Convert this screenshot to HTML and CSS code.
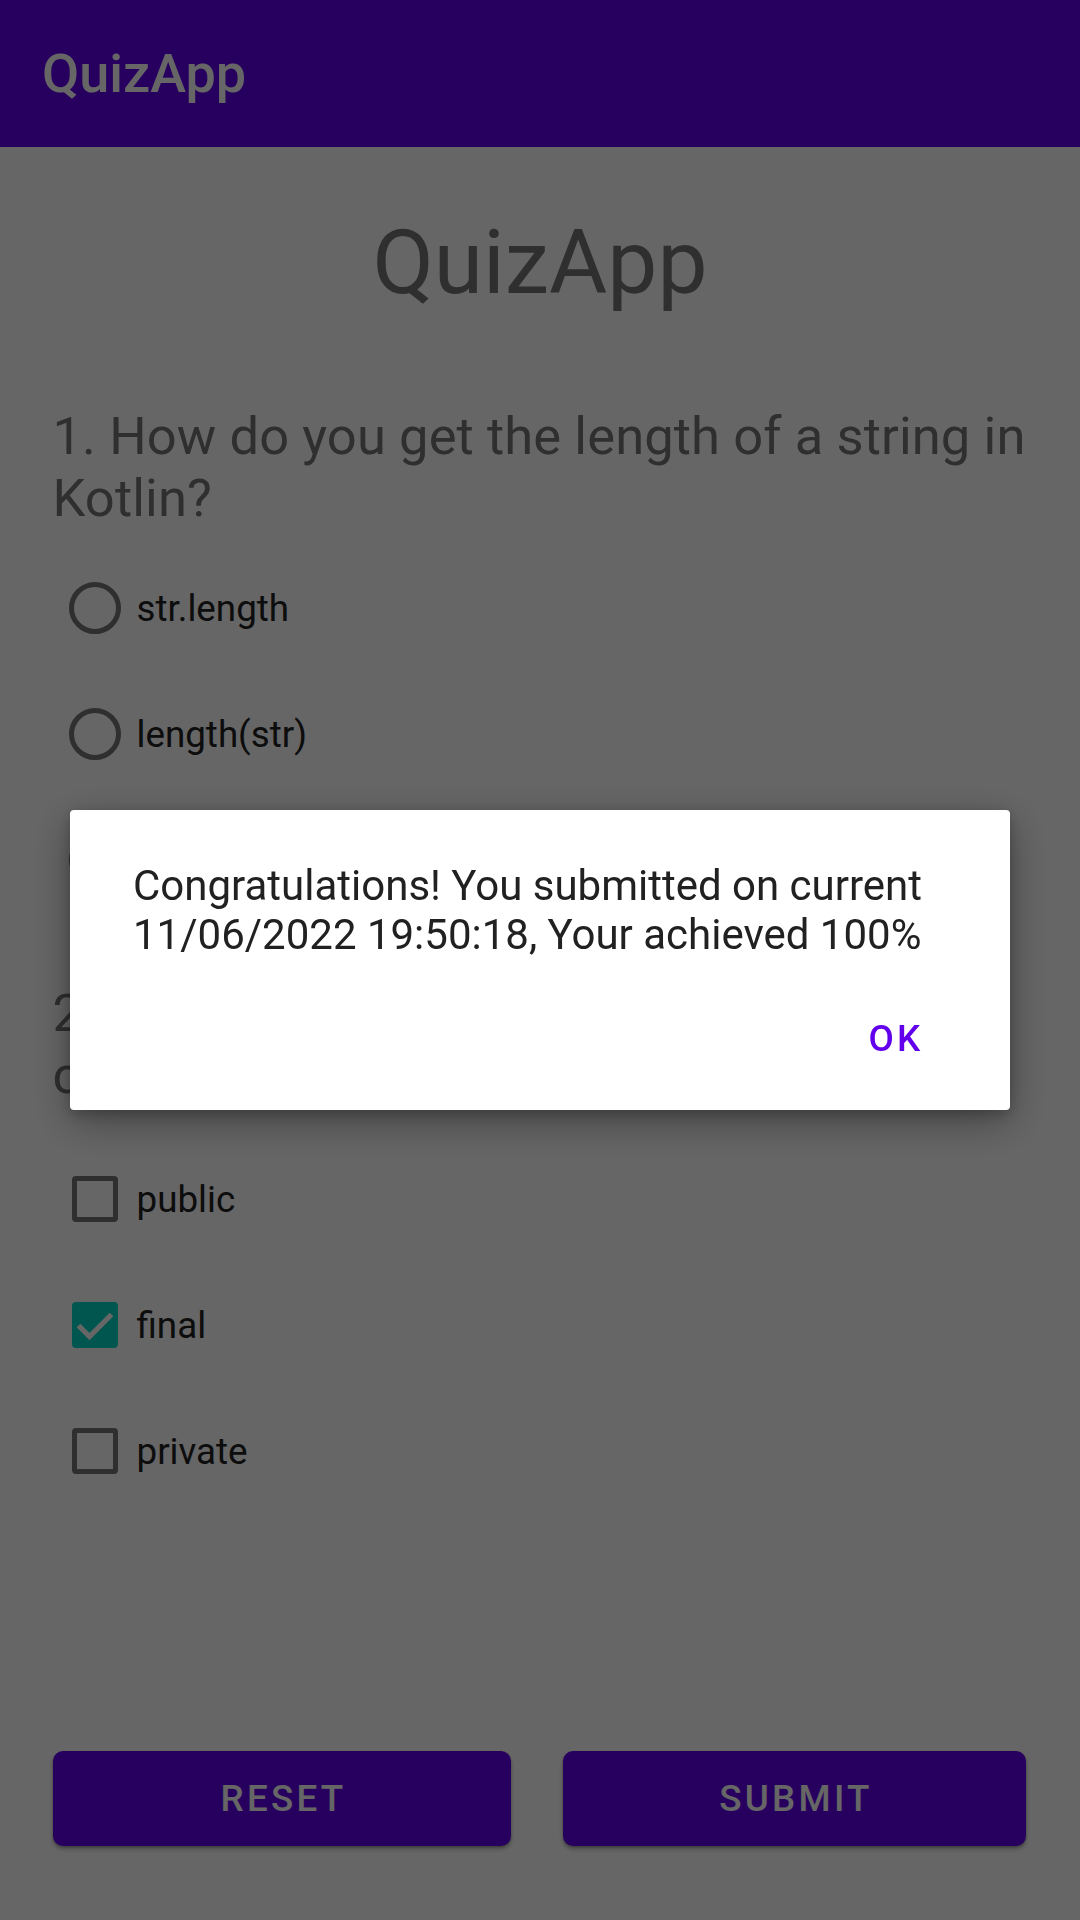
FILE: index.html
```html
<!DOCTYPE html>
<html lang="en">
<head>
<meta charset="utf-8">
<title>QuizApp</title>
<link rel="stylesheet" href="styles.css">
</head>
<body>
<div class="screen">
  <header class="toolbar">
    <h1 class="toolbar-title">QuizApp</h1>
  </header>
  <main class="content">
    <h2 class="app-title">QuizApp</h2>

    <p class="question q1">1. How do you get the length of a string in Kotlin?</p>
    <div class="options options-radio">
      <div class="option">
        <span class="control"><span class="radio"></span></span>
        <span class="option-label">str.length</span>
      </div>
      <div class="option">
        <span class="control"><span class="radio"></span></span>
        <span class="option-label">length(str)</span>
      </div>
      <div class="option">
        <span class="control"><span class="radio"></span></span>
        <span class="option-label">str.size()</span>
      </div>
    </div>

    <p class="question q2">2. Which of these keywords are the valid class modifiers in Kotlin?</p>
    <div class="options options-check">
      <div class="option">
        <span class="control"><span class="checkbox"></span></span>
        <span class="option-label">public</span>
      </div>
      <div class="option">
        <span class="control">
          <span class="checkbox checked">
            <svg class="checkmark" viewBox="0 0 46 46"><polyline points="6.5,23.5 17.5,34.5 39.5,12.5" fill="none" stroke="#ffffff" stroke-width="5.2"/></svg>
          </span>
        </span>
        <span class="option-label">final</span>
      </div>
      <div class="option">
        <span class="control"><span class="checkbox"></span></span>
        <span class="option-label">private</span>
      </div>
    </div>

    <div class="actions">
      <button class="btn">Reset</button>
      <button class="btn">Submit</button>
    </div>
  </main>
</div>

<div class="scrim">
  <div class="dialog" role="dialog">
    <p class="dialog-message">Congratulations! You submitted on current 11/06/2022 19:50:18, Your achieved 100%</p>
    <div class="dialog-actions">
      <button class="dialog-btn">OK</button>
    </div>
  </div>
</div>
</body>
</html>
```
FILE: styles.css
```css
* { box-sizing: border-box; }

html, body {
  margin: 0;
  padding: 0;
  width: 1080px;
  height: 1920px;
  overflow: hidden;
}

body {
  font-family: Roboto, "Liberation Sans", sans-serif;
  background: #ffffff;
  color: #212121;
}

.screen {
  width: 1080px;
  height: 1920px;
  display: flex;
  flex-direction: column;
  background: #ffffff;
}

.toolbar {
  height: 147px;
  flex: 0 0 147px;
  background: #6200ee;
  display: flex;
  align-items: center;
  padding-left: 42px;
}

.toolbar-title {
  margin: 0;
  font-size: 54px;
  font-weight: 500;
  color: #ffffff;
  line-height: normal;
}

.content {
  flex: 1;
  display: flex;
  flex-direction: column;
  padding: 0 40px 74px 52.5px;
}

.app-title {
  margin: 63px 12.5px 0 0;
  font-size: 89.25px;
  font-weight: 400;
  line-height: normal;
  text-align: center;
  color: #757575;
}

.question {
  margin: 0;
  font-size: 52.5px;
  font-weight: 400;
  line-height: normal;
  letter-spacing: 0.1px;
  color: #757575;
}

.q1 { margin-top: 90px; }
.q2 { margin-top: 59px; padding-right: 12.5px; }

.options { display: flex; flex-direction: column; }
.options-radio { margin-top: 16px; }
.options-check { margin-top: 30px; }

.option {
  height: 126px;
  display: flex;
  align-items: center;
}

.control {
  width: 84px;
  flex: 0 0 84px;
  display: flex;
  align-items: center;
  justify-content: center;
}

.radio {
  width: 52px;
  height: 52px;
  border: 5px solid #757575;
  border-radius: 50%;
}

.checkbox {
  width: 46px;
  height: 46px;
  border: 5px solid #757575;
  border-radius: 4px;
  position: relative;
}

.checkbox.checked {
  background: #03dac5;
  border-color: #03dac5;
}

.checkmark {
  position: absolute;
  left: -5px;
  top: -5px;
  width: 46px;
  height: 46px;
}

.option-label {
  font-size: 36.75px;
  line-height: normal;
  color: #212121;
}

.actions {
  margin-top: auto;
  display: grid;
  grid-template-columns: 458px 463px;
  column-gap: 52px;
  margin-left: 0.5px;
}

.btn {
  height: 95px;
  border: none;
  border-radius: 10px;
  background: #6200ee;
  color: #ffffff;
  font-family: Roboto, "Liberation Sans", sans-serif;
  font-size: 36.75px;
  font-weight: 500;
  letter-spacing: 3.28px;
  text-transform: uppercase;
  box-shadow: 0 3px 4px rgba(0, 0, 0, 0.3), 0 1px 2px rgba(0, 0, 0, 0.2);
  padding: 0 0 0 3px;
}

.scrim {
  position: fixed;
  inset: 0;
  background: rgba(0, 0, 0, 0.6);
  display: flex;
  align-items: center;
  justify-content: center;
}

.dialog {
  width: 940px;
  background: #ffffff;
  border-radius: 4px;
  box-shadow: 0 12px 40px rgba(0, 0, 0, 0.35), 0 4px 14px rgba(0, 0, 0, 0.22);
  display: flex;
  flex-direction: column;
}

.dialog-message {
  margin: 0;
  padding: 51px 63px 0 63px;
  font-size: 42px;
  line-height: normal;
  color: #212121;
}

.dialog-actions {
  margin-top: 32px;
  padding: 0 30px 25px 0;
  display: flex;
  justify-content: flex-end;
}

.dialog-btn {
  min-width: 168px;
  height: 94.5px;
  border: none;
  background: transparent;
  color: #6200ee;
  font-family: Roboto, "Liberation Sans", sans-serif;
  font-size: 36.75px;
  font-weight: 500;
  letter-spacing: 3.28px;
  text-transform: uppercase;
  padding: 0 21px;
}
```
